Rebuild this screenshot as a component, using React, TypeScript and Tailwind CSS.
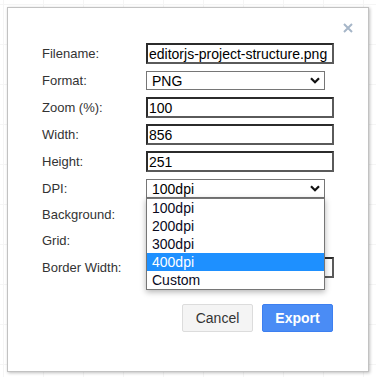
import React from "react";

const Chevron = () => (
  <svg width="10" height="7" viewBox="0 0 10 7" className="shrink-0">
    <path d="M1 1.2 L5 5.2 L9 1.2" fill="none" stroke="#111" strokeWidth="2.2" />
  </svg>
);

const TextInput = ({ value }: { value: string }) => (
  <div className="w-[188px] h-[21px] border-2 border-t-[#2b2b2b] border-l-[#2b2b2b] border-r-[#5a5a5a] border-b-[#5a5a5a] bg-white flex items-center pl-[1px] text-[14px] text-black leading-none whitespace-nowrap overflow-hidden">
    {value}
  </div>
);

const Select = ({ value }: { value: string }) => (
  <div className="w-[179px] h-[19px] border border-[#767676] bg-white flex items-center justify-between pl-[5px] pr-[4px] text-[14px] text-black leading-none">
    <span>{value}</span>
    <Chevron />
  </div>
);

const Row = ({ label, h = "h-[27px]", children }: { label: string; h?: string; children?: React.ReactNode }) => (
  <div className={`flex items-center ${h}`}>
    <div className="w-[104px] text-[13px] text-[#333]">{label}</div>
    <div className="relative">{children}</div>
  </div>
);

const dpiOptions = ["100dpi", "200dpi", "300dpi", "400dpi", "Custom"];

export default function App() {
  return (
    <div className="w-[376px] h-[377px] bg-white bg-[linear-gradient(#f5f5f5_1px,transparent_1px),linear-gradient(90deg,#f5f5f5_1px,transparent_1px)] bg-[size:40px_40px] bg-[position:3px_4px] p-[7px] font-['Liberation_Sans',Arial,sans-serif]">
      <div className="relative w-[362px] h-[365px] bg-white border border-[#c2c2c2] shadow-[1px_1px_3px_rgba(0,0,0,0.25)]">
        <button className="absolute right-[15px] top-[15px] w-[10px] h-[10px] flex items-center justify-center">
          <svg width="10" height="10" viewBox="0 0 10 10">
            <path d="M1 1 L9 9 M9 1 L1 9" stroke="#a6b6c8" strokeWidth="2" />
          </svg>
        </button>

        <div className="pt-[32px] pl-[34px]">
          <Row label="Filename:">
            <TextInput value="editorjs-project-structure.png" />
          </Row>
          <Row label="Format:">
            <Select value="PNG" />
          </Row>
          <Row label="Zoom (%):">
            <TextInput value="100" />
          </Row>
          <Row label="Width:">
            <TextInput value="856" />
          </Row>
          <Row label="Height:">
            <TextInput value="251" />
          </Row>
          <Row label="DPI:">
            <Select value="100dpi" />
            <div className="absolute left-0 top-[19px] z-10 w-[179px] border border-[#767676] bg-white shadow-[0_2px_6px_rgba(0,0,0,0.3)] text-[14px] leading-[18px] text-[#0a0a1e]">
              {dpiOptions.map((o) => (
                <div
                  key={o}
                  className={o === "400dpi" ? "h-[18px] pl-[5px] bg-[#1e90ff] text-white" : "h-[18px] pl-[5px]"}
                >
                  {o}
                </div>
              ))}
            </div>
          </Row>
          <Row label="Background:" h="h-[26px]" />
          <Row label="Grid:" h="h-[26px]" />
          <Row label="Border Width:">
            <TextInput value="" />
          </Row>

          <div className="flex justify-end gap-[9px] pr-[35px] mt-[23px]">
            <button className="w-[71px] h-[28px] rounded-[2px] border border-[#dcdcdc] bg-[#f4f4f4] text-[14px] text-[#333]">
              Cancel
            </button>
            <button className="w-[71px] h-[28px] rounded-[2px] border border-[#3d7ff0] bg-[#4a8cf5] text-[14px] font-bold text-white">
              Export
            </button>
          </div>
        </div>
      </div>
    </div>
  );
}
